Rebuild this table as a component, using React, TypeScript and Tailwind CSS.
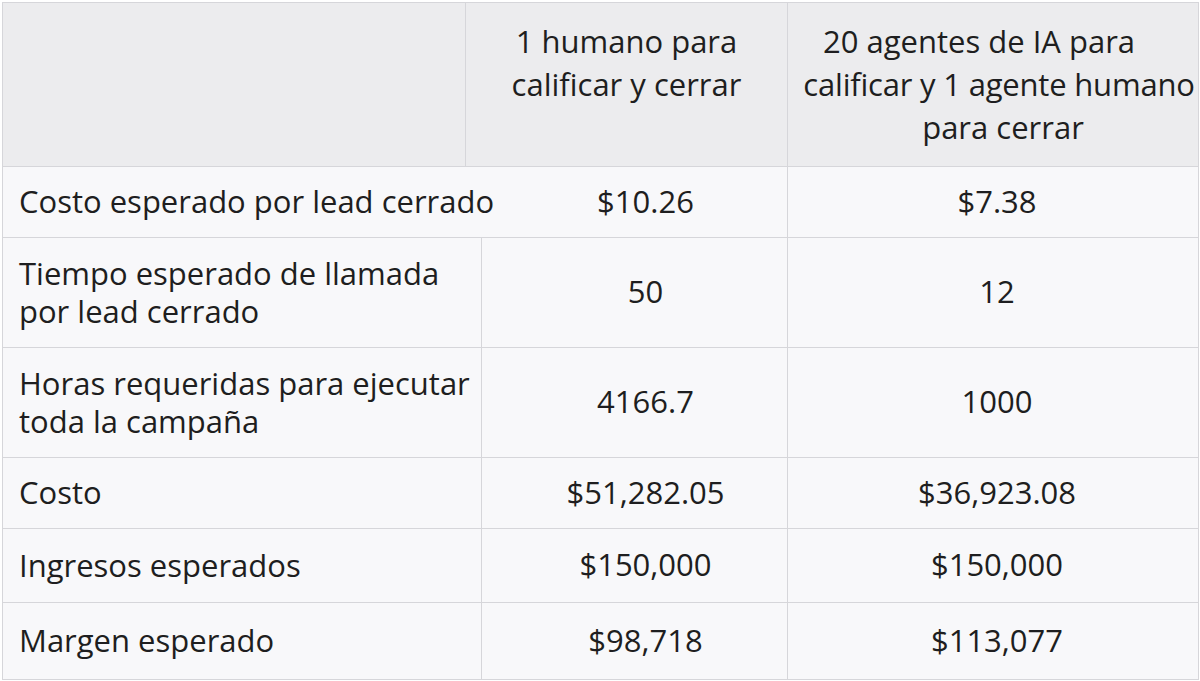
const rows = [
  { label: ["Costo esperado por lead cerrado"], a: "$10.26", b: "$7.38", h: "h-[71px]", open: true },
  { label: ["Tiempo esperado de llamada", "por lead cerrado"], a: "50", b: "12", h: "h-[110px]" },
  { label: ["Horas requeridas para ejecutar", "toda la campaña"], a: "4166.7", b: "1000", h: "h-[110px]" },
  { label: ["Costo"], a: "$51,282.05", b: "$36,923.08", h: "h-[71px]" },
  { label: ["Ingresos esperados"], a: "$150,000", b: "$150,000", h: "h-[74px]" },
  { label: ["Margen esperado"], a: "$98,718", b: "$113,077", h: "h-[76px]" },
];

export default function App() {
  return (
    <div className="w-[1200px] h-[681px] bg-white pt-[2px] pl-[2px]" style={{ fontFamily: '"Open Sans", "Noto Sans", sans-serif' }}>
      <div className="w-[1197px] border border-[#d6d6da] text-[#1e1e20] text-[31px]">
        {/* header */}
        <div className="flex h-[164px] bg-[#ececee] border-b border-[#d6d6da] leading-[43px] text-center">
          <div className="w-[463px] shrink-0 border-r border-[#d6d6da]" />
          <div className="w-[322px] shrink-0 border-r border-[#d6d6da] pt-[17px]">
            <div className="whitespace-nowrap">1 humano para</div>
            <div className="whitespace-nowrap">calificar y cerrar</div>
          </div>
          <div className="flex-1 min-w-0 pt-[17px] pl-[12px]">
            <div className="pr-[40px] whitespace-nowrap">20 agentes de IA para</div>
            <div className="whitespace-nowrap tracking-[-0.2px]">calificar y 1 agente humano</div>
            <div className="pl-[8px]">para cerrar</div>
          </div>
        </div>

        {rows.map((r, i) => (
          <div key={i} className={`flex ${r.h} bg-[#f8f8fa] ${i < rows.length - 1 ? "border-b border-[#d6d6da]" : ""}`}>
            <div className={`w-[479px] shrink-0 flex flex-col justify-center pl-[16px] pb-[2px] leading-[38px] whitespace-nowrap ${r.open ? "" : "border-r border-[#d6d6da]"}`}>
              {r.label.map(l => (
                <div key={l}>{l}</div>
              ))}
            </div>
            <div className="w-[306px] shrink-0 border-r border-[#d6d6da] flex items-center justify-center pl-[22px] pb-[2px] whitespace-nowrap">
              {r.a}
            </div>
            <div className="flex-1 min-w-0 flex items-center justify-center pl-[8px] pb-[2px]">{r.b}</div>
          </div>
        ))}
      </div>
    </div>
  );
}
